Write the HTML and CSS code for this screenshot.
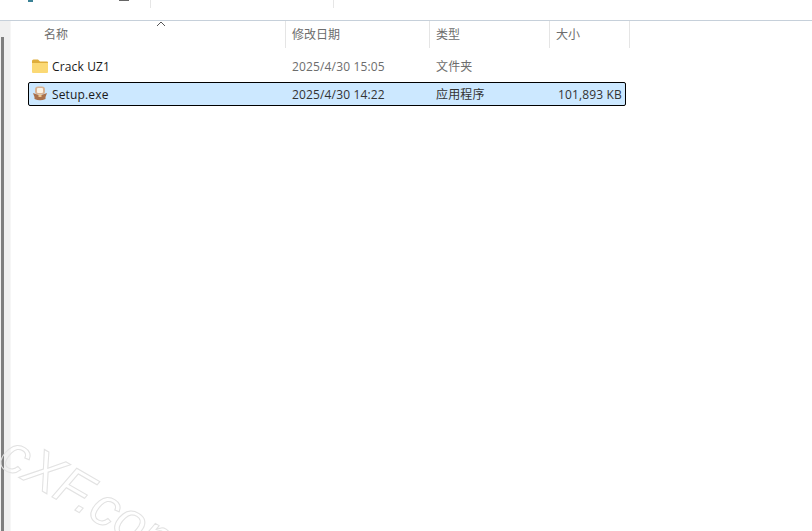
FILE: index.html
```html
<!DOCTYPE html>
<html lang="zh-CN">
<head>
    <meta charset="UTF-8">
    <title>Setup</title>
    <link rel="stylesheet" href="styles.css">
</head>
<body>
    <div class="toolbar">
        <span class="tool-dot"></span>
        <span class="tool-dash"></span>
        <span class="tool-sep first"></span>
        <span class="tool-sep second"></span>
    </div>

    <div class="main">
        <div class="side">
            <div class="scrollbar"></div>
        </div>

        <div class="files">
            <div class="head">
                <div class="head-cell name-head">名称
                    <svg class="sort" width="10" height="6" viewBox="0 0 10 6">
                        <polyline points="1,5 5,1 9,5" fill="none" stroke="#555" stroke-width="1"/>
                    </svg>
                </div>
                <div class="head-cell">修改日期</div>
                <div class="head-cell">类型</div>
                <div class="head-cell">大小</div>
            </div>

            <div class="row">
                <div class="cell name">
                    <svg class="icon" width="18" height="16" viewBox="0 0 18 16">
                        <path d="M1 3 Q1 1.500 2.500 1.500 H7 L9 3.500 H16 Q17 3.500 17 4.500 V6 H1 Z" fill="#dfae3c"/>
                        <path d="M1 5 H17 V14 Q17 15 16 15 H2 Q1 15 1 14 Z" fill="#fbd975"/>
                    </svg>
                    Crack UZ1
                </div>
                <div class="cell">2025/4/30 15:05</div>
                <div class="cell">文件夹</div>
                <div class="cell size"></div>
            </div>

            <div class="row selected">
                <div class="cell name">
                    <svg class="icon" width="18" height="16" viewBox="0 0 18 16">
                        <rect x="4" y="0.500" width="10" height="8" rx="3" fill="#d9b394"/>
                        <rect x="6" y="2" width="6" height="5" rx="1" fill="#fbf3e6"/>
                        <path d="M2 7 L9 9.500 L16 7 L14.500 11 V13 Q9 15.500 3.500 13 V11 Z" fill="#a9714c"/>
                        <rect x="7.500" y="8.500" width="3" height="2.500" fill="#efc78f"/>
                    </svg>
                    Setup.exe
                </div>
                <div class="cell dark">2025/4/30 14:22</div>
                <div class="cell dark">应用程序</div>
                <div class="cell size dark">101,893 KB</div>
            </div>
        </div>
    </div>

    <div class="overlay">
        <div class="watermark">cXF.com</div>
    </div>
</body>
</html>
```

FILE: styles.css
```css
* {
    box-sizing: border-box;
    margin: 0;
    padding: 0;
}

body {
    width: 812px;
    height: 531px;
    overflow: hidden;
    background-color: #fff;
    font-family: "Open Sans", "Noto Sans CJK SC", sans-serif;
    font-size: 12px;
    color: #6d6d6d;
    position: relative;
}

/* Top strip, only the bottom edge of the toolbar is visible */
.toolbar {
    height: 21px;
    border-bottom: 1px solid #c6d0da;
    position: relative;
}

.tool-dot {
    position: absolute;
    left: 28px;
    top: 0;
    width: 5px;
    height: 2px;
    background-color: #3b8296;
}

.tool-dash {
    position: absolute;
    left: 119px;
    top: 0;
    width: 10px;
    height: 1px;
    background-color: #666;
}

.tool-sep {
    position: absolute;
    top: 0;
    width: 1px;
    height: 8px;
    background-color: #e6e6e6;
}

.tool-sep.first {
    left: 150px;
}

.tool-sep.second {
    left: 333px;
}

.main {
    display: flex;
    height: 510px;
}

/* Left pane edge */
.side {
    width: 11px;
    background-color: #f0f0f0;
    border-right: 1px solid #f6f6f6;
    padding: 16px 0 0 1px;
}

.scrollbar {
    width: 3px;
    height: 100%;
    background-color: #7f7f7f;
}

.files {
    flex: 1;
    padding-left: 17px;
}

.head {
    display: grid;
    grid-template-columns: 258px 144px 120px 80px;
    height: 27px;
    width: 602px;
}

.head-cell {
    border-right: 1px solid #e5e5e5;
    padding: 5px 0 0 6px;
    line-height: 17px;
    position: relative;
}

.name-head {
    padding-left: 16px;
}

.sort {
    position: absolute;
    left: 128px;
    top: 0;
}

.row {
    display: grid;
    grid-template-columns: 258px 144px 120px 71px;
    align-items: center;
    width: 598px;
    height: 24px;
    border: 1px solid transparent;
    margin-top: 6px;
}

.row + .row {
    margin-top: 4px;
}

.row.selected {
    background-color: #cce8ff;
    border-color: #000;
    border-radius: 2px;
}

.cell {
    padding-left: 5px;
    line-height: 17px;
    letter-spacing: 0.15px;
    white-space: nowrap;
}

.cell.name {
    display: flex;
    align-items: center;
    gap: 3px;
    padding-left: 2px;
    color: #1a1a1a;
}

.cell.dark {
    color: #333;
}

.cell.size {
    padding: 0;
    text-align: right;
}

.overlay {
    position: absolute;
    left: 0;
    top: 0;
    width: 812px;
    height: 531px;
    overflow: hidden;
    pointer-events: none;
}

.watermark {
    position: absolute;
    left: 20px;
    top: 423px;
    font-family: "Liberation Sans", sans-serif;
    font-size: 54px;
    line-height: 58px;
    font-style: italic;
    color: transparent;
    -webkit-text-stroke: 1px #e2e2e2;
    transform: rotate(30deg);
    transform-origin: left top;
}
```
